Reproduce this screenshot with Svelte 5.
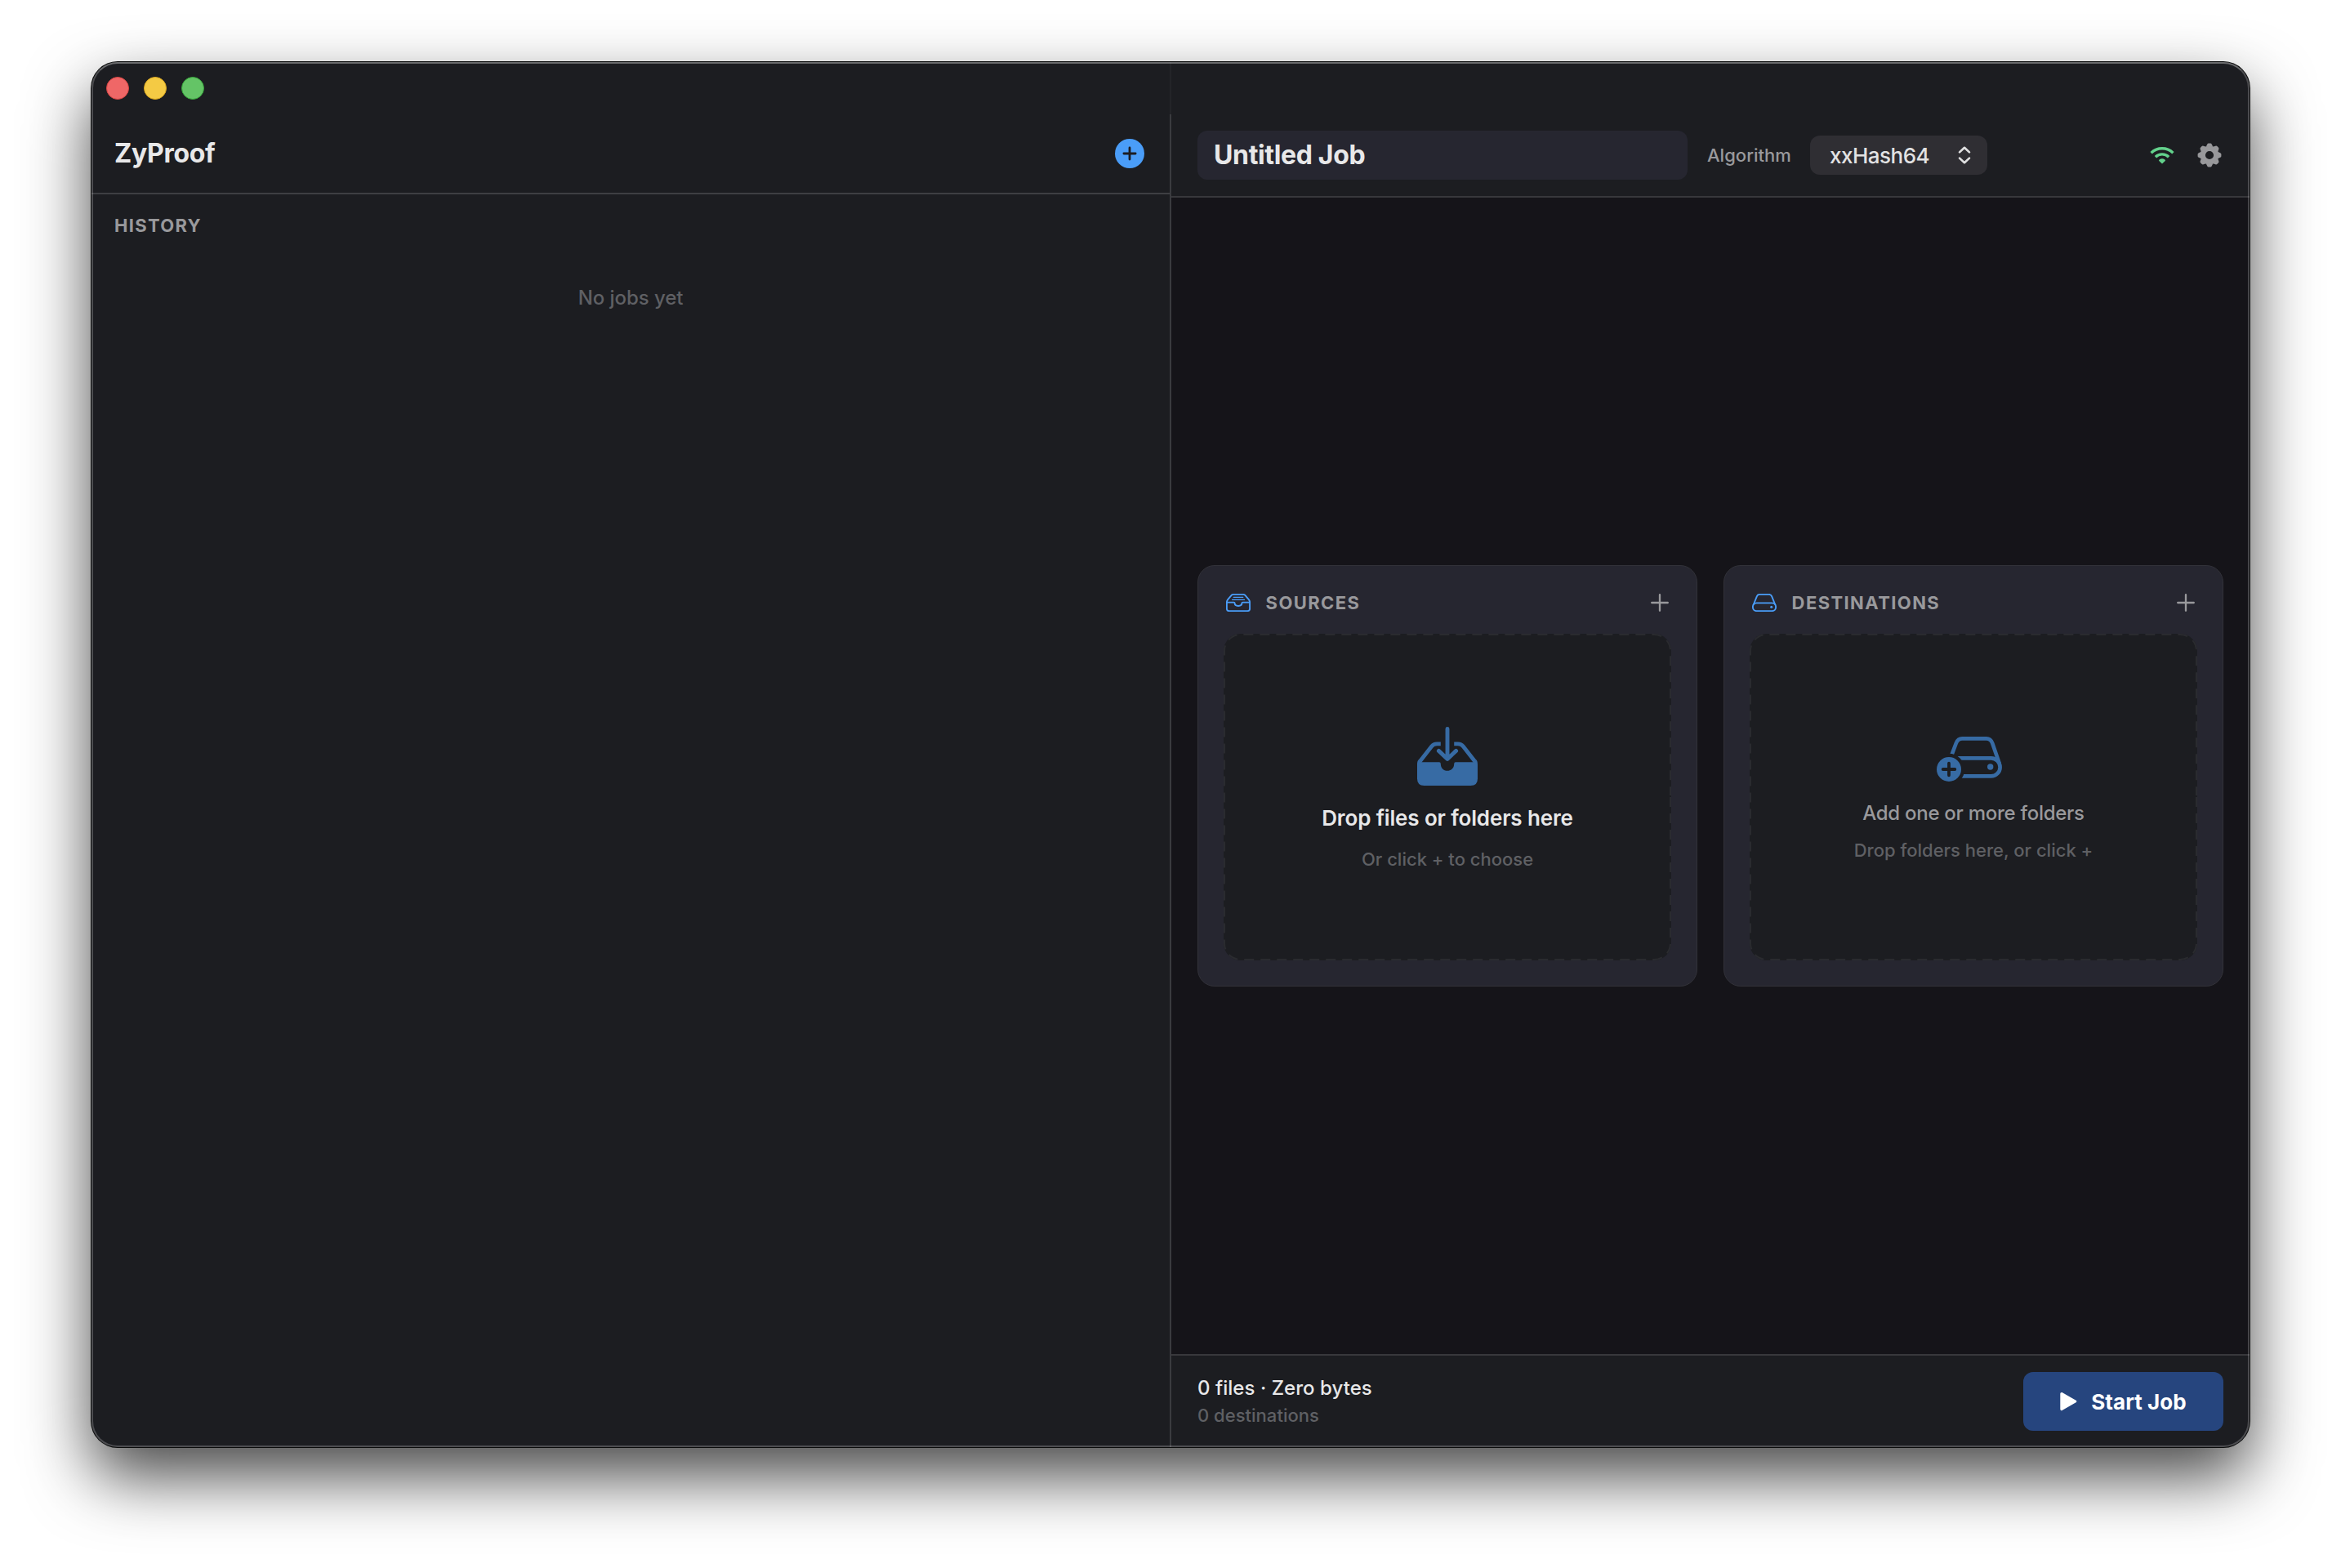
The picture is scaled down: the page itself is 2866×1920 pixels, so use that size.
<script lang="ts">
	let jobName = $state('Untitled Job');
	let algorithm = $state('xxHash64');

	const teeth = [0, 45, 90, 135, 180, 225, 270, 315];
</script>

{#snippet plus()}
	<svg class="plus" width="22" height="22" viewBox="0 0 22 22">
		<path d="M11 1.2V20.8M1.2 11H20.8" fill="none" stroke="currentColor" stroke-width="2.3" stroke-linecap="round" />
	</svg>
{/snippet}

{#snippet dashes()}
	<!-- starts at the middle of the right edge, clockwise -->
	<svg class="dashes" width="548" height="400" viewBox="0 0 548 400">
		<path d="M547 200V379A20 20 0 0 1 527 399H21A20 20 0 0 1 1 379V21A20 20 0 0 1 21 1H527A20 20 0 0 1 547 21V198" />
	</svg>
{/snippet}

<main>
	<div class="window">
		<aside>
			<div class="titlebar">
				<span class="light close"></span>
				<span class="light minimize"></span>
				<span class="light zoom"></span>
			</div>
			<header class="side-header">
				<h1>ZyProof</h1>
				<button class="new-job" aria-label="New job">
					<svg width="36" height="36" viewBox="0 0 36 36">
						<circle cx="18" cy="18" r="18" fill="#4a9df8" />
						<path d="M18 10.9V25.1M10.9 18H25.1" stroke="#1c1d22" stroke-width="2.8" stroke-linecap="round" />
					</svg>
				</button>
			</header>
			<h2 class="history">HISTORY</h2>
			<p class="empty">No jobs yet</p>
		</aside>

		<div class="divider"></div>

		<section class="pane">
			<div class="titlebar"></div>
			<header class="toolbar">
				<div class="job-name">{jobName}</div>
				<span class="label">Algorithm</span>
				<div class="select">
					<span>{algorithm}</span>
					<svg width="16" height="22" viewBox="0 0 16 22">
						<path d="M2 7.4L8 1.8L14 7.4M2 14.6L8 20.2L14 14.6" fill="none" stroke="#e0e0e1" stroke-width="2.6" stroke-linecap="round" stroke-linejoin="round" />
					</svg>
				</div>
				<div class="status">
					<svg width="30" height="22" viewBox="0 0 30 22">
						<path d="M1.6 8.2A19.2 19.2 0 0 1 28.4 8.2M6.9 13.2A11.6 11.6 0 0 1 23.1 13.2" fill="none" stroke="#63d18c" stroke-width="3.4" />
						<path d="M15 21.6L11 17.7C11 16.2 13 15.2 15 15.2S19 16.2 19 17.7Z" fill="#63d18c" />
					</svg>
					<svg width="30" height="30" viewBox="-15 -15 30 30">
						<circle r="8.2" fill="none" stroke="#98989b" stroke-width="6.2" />
						{#each teeth as angle}
							<path transform="rotate({angle})" d="M-4.3 -10.2L-2.8 -13.2Q-2.3 -14.4 -1.2 -14.4H1.2Q2.3 -14.4 2.8 -13.2L4.3 -10.2Z" fill="#98989b" />
						{/each}
					</svg>
				</div>
			</header>

			<div class="content">
				<div class="card">
					<div class="card-header">
						<svg width="30" height="22" viewBox="0 0 30 22">
							<g fill="none" stroke="#4a9df8" stroke-width="1.9" stroke-linecap="round">
								<path d="M.9 10.6V18.4A2.7 2.7 0 0 0 3.6 21.1H26.4A2.7 2.7 0 0 0 29.1 18.4V10.6C29.1 9 28.8 8.4 28 7.4L23.6 2.2C22.9 1.3 22.2 .9 21 .9H9C7.8 .9 7.1 1.3 6.4 2.2L2 7.4C1.2 8.4 .9 9 .9 10.6Z" />
								<path d="M.9 10.6H9.4Q10.6 10.6 10.6 11.6C10.6 13.6 12.4 15 15 15S19.4 13.6 19.4 11.6Q19.4 10.6 20.6 10.6H29.1" />
								<path d="M9.3 4.4H20.7M7.6 7.4H22.4" stroke-width="1.3" />
							</g>
						</svg>
						<h2>SOURCES</h2>
						{@render plus()}
					</div>
					<div class="drop">
						{@render dashes()}
						<svg width="74" height="72" viewBox="0 0 74 72">
							<g fill="none" stroke="#376ba4" stroke-width="4.8">
								<path d="M28.8 20.8H24.2C21 20.8 19.4 21.6 17.6 23.9L3.4 42.3M45.2 20.8H49.8C53 20.8 54.6 21.6 56.4 23.9L70.6 42.3" />
								<path d="M37 2.5V39M26.4 29.4L37 39.4L47.6 29.4" stroke-width="4.9" stroke-linecap="round" stroke-linejoin="round" />
							</g>
							<path d="M0 46.5C0 43.5 .4 42 1.6 40.6L5.4 43.2H27Q28.8 43.2 28.8 45.2C28.8 50.4 32.2 53.8 37 53.8S45.2 50.4 45.2 45.2Q45.2 43.2 47 43.2H68.6L72.4 40.6C73.6 42 74 43.5 74 46.5V63.5Q74 72 65.5 72H8.5Q0 72 0 63.5Z" fill="#376ba4" />
						</svg>
						<p class="drop-title strong">Drop files or folders here</p>
						<p class="hint">Or click + to choose</p>
					</div>
				</div>

				<div class="card">
					<div class="card-header">
						<svg width="30" height="22" viewBox="0 0 30 22">
							<g fill="none" stroke="#4a9df8" stroke-width="1.9">
								<rect x=".9" y="11.4" width="28.2" height="9.7" rx="4.6" />
								<path d="M1.5 14L5.9 3.2Q6.8 .9 9.2 .9H20.8Q23.2 .9 24.1 3.2L28.5 14" />
							</g>
							<circle cx="23.7" cy="16.2" r="1.5" fill="#4a9df8" />
						</svg>
						<h2>DESTINATIONS</h2>
						{@render plus()}
					</div>
					<div class="drop tight">
						{@render dashes()}
						<svg width="90" height="55" viewBox="0 0 90 55">
							<mask id="badge-gap">
								<rect width="90" height="55" fill="#fff" />
								<circle cx="15" cy="40" r="19.2" fill="#000" />
							</mask>
							<g mask="url(#badge-gap)">
								<g fill="none" stroke="#376ba4" stroke-width="4.7">
									<rect x="14" y="26.4" width="63.6" height="22" rx="11" />
									<path d="M16.8 26.6L23.8 8Q26 2.4 31.2 2.4H60.8Q66 2.4 68.2 8L76.8 33" />
								</g>
								<circle cx="65.7" cy="37" r="3.7" fill="#376ba4" />
							</g>
							<circle cx="15" cy="40" r="15" fill="#376ba4" />
							<path d="M15 32.7V47.3M7.7 40H22.3" stroke="#1c1d21" stroke-width="3.8" stroke-linecap="round" />
						</svg>
						<p class="drop-title">Add one or more folders</p>
						<p class="hint">Drop folders here, or click +</p>
					</div>
				</div>
			</div>

			<footer>
				<div>
					<p class="summary">0 files · Zero bytes</p>
					<p class="targets">0 destinations</p>
				</div>
				<button class="start">
					<svg width="21" height="24" viewBox="0 0 21 24">
						<path d="M1.8 2.4L18.8 12L1.8 21.6Z" fill="#fff" stroke="#fff" stroke-width="3" stroke-linejoin="round" />
					</svg>
					Start Job
				</button>
			</footer>
		</section>
	</div>
</main>

<style>
	:global(body) {
		margin: 0;
		background: #fff;
	}

	main {
		box-sizing: border-box;
		width: 2866px;
		height: 1920px;
		padding: 76px 112px 148px;
		overflow: hidden;
		font-family: Inter, 'Liberation Sans', sans-serif;
		font-weight: 450;
		color: #e8e8e9;
	}

	h1, h2, p { margin: 0; }
	svg { display: block; flex: none; }
	button {
		border: 0;
		padding: 0;
		background: none;
		font: inherit;
		color: inherit;
	}

	.window {
		position: relative;
		display: flex;
		height: 1696px;
		border-radius: 32px;
		background: #1c1d21;
		box-shadow: 0 0 0 1px #0a0b0b, 0 36px 80px rgba(0, 0, 0, 0.72);
	}
	/* hairline highlight round the window edge */
	.window::after {
		content: '';
		position: absolute;
		inset: 0;
		border: 2px solid rgba(255, 255, 255, 0.21);
		border-top-color: rgba(255, 255, 255, 0.34);
		border-radius: 32px;
		pointer-events: none;
	}

	aside { width: 1320px; }

	.titlebar {
		display: flex;
		align-items: center;
		gap: 18px;
		height: 64px;
		padding-left: 18px;
	}
	.light {
		box-sizing: border-box;
		width: 28px;
		height: 28px;
		border-radius: 50%;
	}
	.close { background: #ef6767; border: 1px solid #d74543; }
	.minimize { background: #f4ca44; border: 1px solid #dba81f; }
	.zoom { background: #64c466; border: 1px solid #36a53a; }

	.side-header {
		display: flex;
		align-items: center;
		justify-content: space-between;
		height: 96px;
		padding: 0 31px 0 28px;
		border-bottom: 2px solid #3e3f43;
	}
	h1 {
		font-size: 32px;
		font-weight: 700;
		line-height: 40px;
		letter-spacing: -0.3px;
	}
	h2 {
		font-size: 22px;
		font-weight: 650;
		line-height: 28px;
		color: #99999c;
	}
	.history {
		padding: 24px 28px 0;
		letter-spacing: 1.3px;
	}
	.empty {
		margin-top: 60px;
		font-size: 24px;
		line-height: 30px;
		letter-spacing: -0.06px;
		text-align: center;
		color: #5f6064;
	}

	.divider {
		width: 2px;
		background: linear-gradient(#232428 64px, #3a3b3f 64px);
	}

	.pane {
		display: flex;
		flex-direction: column;
		width: 1320px;
	}
	.toolbar {
		display: flex;
		align-items: center;
		height: 100px;
		padding: 0 34px 0 32px;
		border-bottom: 2px solid #38383c;
	}
	.job-name {
		box-sizing: border-box;
		width: 600px;
		height: 60px;
		padding-left: 20px;
		border-radius: 12px;
		background: #262630;
		font-size: 32px;
		font-weight: 650;
		line-height: 60px;
		letter-spacing: -0.35px;
	}
	.label {
		width: 102px;
		margin: 0 24px;
		font-size: 22px;
		letter-spacing: 0.02px;
		color: #99999c;
	}
	.select {
		box-sizing: border-box;
		display: flex;
		align-items: center;
		justify-content: space-between;
		width: 217px;
		height: 48px;
		padding: 0 20px 0 24px;
		border-radius: 12px;
		background: #2f2e33;
		font-size: 26px;
		letter-spacing: -0.5px;
		color: #e2e2e3;
	}
	.status {
		display: flex;
		align-items: center;
		gap: 28px;
		margin-left: auto;
	}

	.content {
		display: flex;
		flex: 1;
		align-items: center;
		gap: 32px;
		padding: 0 32px;
		background: #151419;
	}
	.card {
		box-sizing: border-box;
		width: 612px;
		height: 516px;
		padding: 31px;
		border: 1px solid #323239;
		border-radius: 21px;
		background: #262630;
	}
	.card-header {
		display: flex;
		align-items: center;
		gap: 18.6px;
		height: 28px;
		margin-bottom: 24px;
		padding: 0 3px;
		color: #99999c;
	}
	.card-header h2 { letter-spacing: 1.4px; }
	.plus { margin-left: auto; }

	.drop {
		position: relative;
		box-sizing: border-box;
		display: flex;
		flex-direction: column;
		align-items: center;
		justify-content: center;
		height: 400px;
		padding-top: 4px;
		border-radius: 21px;
		background: #1c1d21;
	}
	.dashes {
		position: absolute;
		inset: 0;
	}
	.dashes path {
		fill: none;
		stroke: #2a2b2f;
		stroke-width: 2;
		stroke-dasharray: 12 8;
	}
	.drop-title {
		margin-top: 24px;
		font-size: 24px;
		line-height: 30px;
		letter-spacing: -0.27px;
		color: #99999c;
	}
	.drop-title.strong {
		font-size: 26px;
		font-weight: 600;
		line-height: 32px;
		letter-spacing: -0.14px;
		color: #e8e8e9;
	}
	.hint {
		margin-top: 20px;
		font-size: 22px;
		line-height: 28px;
		letter-spacing: 0;
		color: #5f6064;
	}
	.tight .hint { margin-top: 16px; }

	footer {
		display: flex;
		align-items: center;
		justify-content: space-between;
		height: 112px;
		padding: 0 32px;
		border-top: 2px solid #38383c;
	}
	.summary {
		font-size: 24px;
		font-weight: 550;
		line-height: 30px;
		letter-spacing: 0.04px;
	}
	.targets {
		margin-top: 4px;
		font-size: 22px;
		line-height: 28px;
		letter-spacing: 0.02px;
		color: #5f6064;
	}
	.start {
		display: flex;
		align-items: center;
		justify-content: center;
		gap: 17px;
		width: 245px;
		height: 72px;
		border-radius: 12px;
		background: #26457e;
		font-size: 26px;
		font-weight: 650;
		letter-spacing: 0.05px;
		color: #fff;
	}
</style>
